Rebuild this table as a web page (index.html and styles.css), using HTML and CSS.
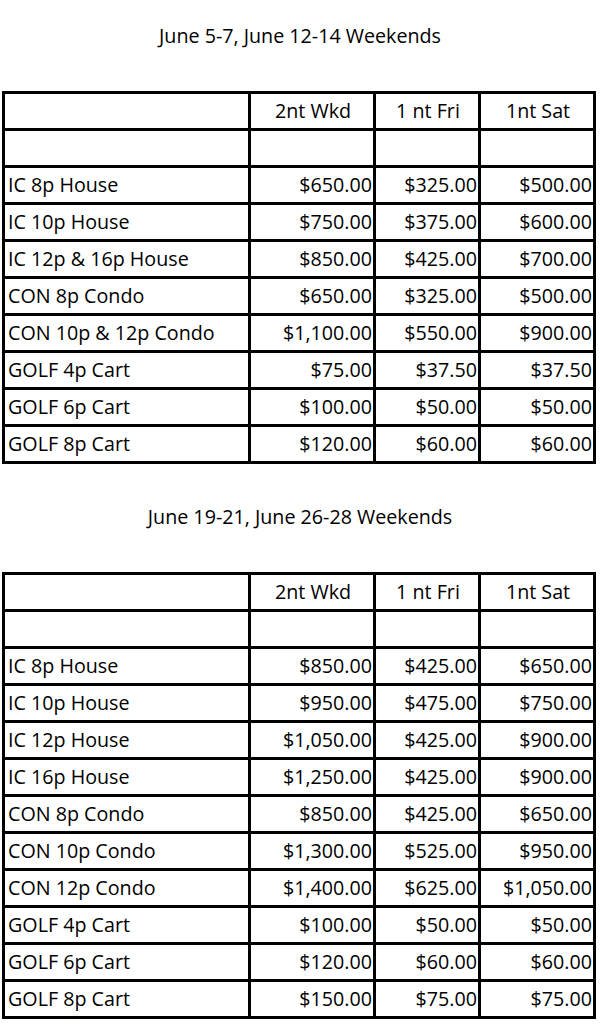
FILE: index.html
```html
<!DOCTYPE html>
<html>
<head>
<meta charset="utf-8">
<link rel="stylesheet" href="styles.css">
</head>
<body>
<div class="sheet">
  <div class="title">June 5-7, June 12-14 Weekends</div>
  <table class="rates">
    <tr class="head"><td class="name"></td><td>2nt Wkd</td><td>1 nt Fri</td><td>1nt Sat</td></tr>
    <tr><td class="name"></td><td></td><td></td><td></td></tr>
    <tr><td class="name">IC 8p House</td><td>$650.00</td><td>$325.00</td><td>$500.00</td></tr>
    <tr><td class="name">IC 10p House</td><td>$750.00</td><td>$375.00</td><td>$600.00</td></tr>
    <tr><td class="name">IC 12p &amp; 16p House</td><td>$850.00</td><td>$425.00</td><td>$700.00</td></tr>
    <tr><td class="name">CON 8p Condo</td><td>$650.00</td><td>$325.00</td><td>$500.00</td></tr>
    <tr><td class="name">CON 10p &amp; 12p Condo</td><td>$1,100.00</td><td>$550.00</td><td>$900.00</td></tr>
    <tr><td class="name">GOLF 4p Cart</td><td>$75.00</td><td>$37.50</td><td>$37.50</td></tr>
    <tr><td class="name">GOLF 6p Cart</td><td>$100.00</td><td>$50.00</td><td>$50.00</td></tr>
    <tr><td class="name">GOLF 8p Cart</td><td>$120.00</td><td>$60.00</td><td>$60.00</td></tr>
  </table>
  <div class="title">June 19-21, June 26-28 Weekends</div>
  <table class="rates">
    <tr class="head"><td class="name"></td><td>2nt Wkd</td><td>1 nt Fri</td><td>1nt Sat</td></tr>
    <tr><td class="name"></td><td></td><td></td><td></td></tr>
    <tr><td class="name">IC 8p House</td><td>$850.00</td><td>$425.00</td><td>$650.00</td></tr>
    <tr><td class="name">IC 10p House</td><td>$950.00</td><td>$475.00</td><td>$750.00</td></tr>
    <tr><td class="name">IC 12p House</td><td>$1,050.00</td><td>$425.00</td><td>$900.00</td></tr>
    <tr><td class="name">IC 16p House</td><td>$1,250.00</td><td>$425.00</td><td>$900.00</td></tr>
    <tr><td class="name">CON 8p Condo</td><td>$850.00</td><td>$425.00</td><td>$650.00</td></tr>
    <tr><td class="name">CON 10p Condo</td><td>$1,300.00</td><td>$525.00</td><td>$950.00</td></tr>
    <tr><td class="name">CON 12p Condo</td><td>$1,400.00</td><td>$625.00</td><td>$1,050.00</td></tr>
    <tr><td class="name">GOLF 4p Cart</td><td>$100.00</td><td>$50.00</td><td>$50.00</td></tr>
    <tr><td class="name">GOLF 6p Cart</td><td>$120.00</td><td>$60.00</td><td>$60.00</td></tr>
    <tr><td class="name">GOLF 8p Cart</td><td>$150.00</td><td>$75.00</td><td>$75.00</td></tr>
  </table>
</div>
</body>
</html>
```

FILE: styles.css
```css
html, body {
  margin: 0;
  padding: 0;
  background: #ffffff;
}

.sheet {
  padding-top: 24px;
  font-family: "Open Sans", "Liberation Sans", sans-serif;
  font-size: 19.7px;
  color: #000000;
}

.title {
  height: 24px;
  line-height: 24px;
  text-align: center;
  margin-bottom: 43px;
}

.rates {
  margin-left: 2px;
  margin-bottom: 41px;
  border-collapse: separate;
  border-spacing: 0;
  border-left: 3px solid #000;
  border-top: 3px solid #000;
  table-layout: fixed;
  width: 594px;
}

.rates td {
  box-sizing: border-box;
  height: 37px;
  padding: 0 1px 0 3px;
  border-right: 3px solid #000;
  border-bottom: 3px solid #000;
  text-align: right;
  vertical-align: middle;
  white-space: nowrap;
  line-height: 24px;
}

.rates td:nth-child(1) { width: 246px; }
.rates td:nth-child(2) { width: 125px; }
.rates td:nth-child(3) { width: 105px; }
.rates td:nth-child(4) { width: 115px; }

.rates td.name {
  text-align: left;
}

.rates .head td {
  text-align: center;
}
```
